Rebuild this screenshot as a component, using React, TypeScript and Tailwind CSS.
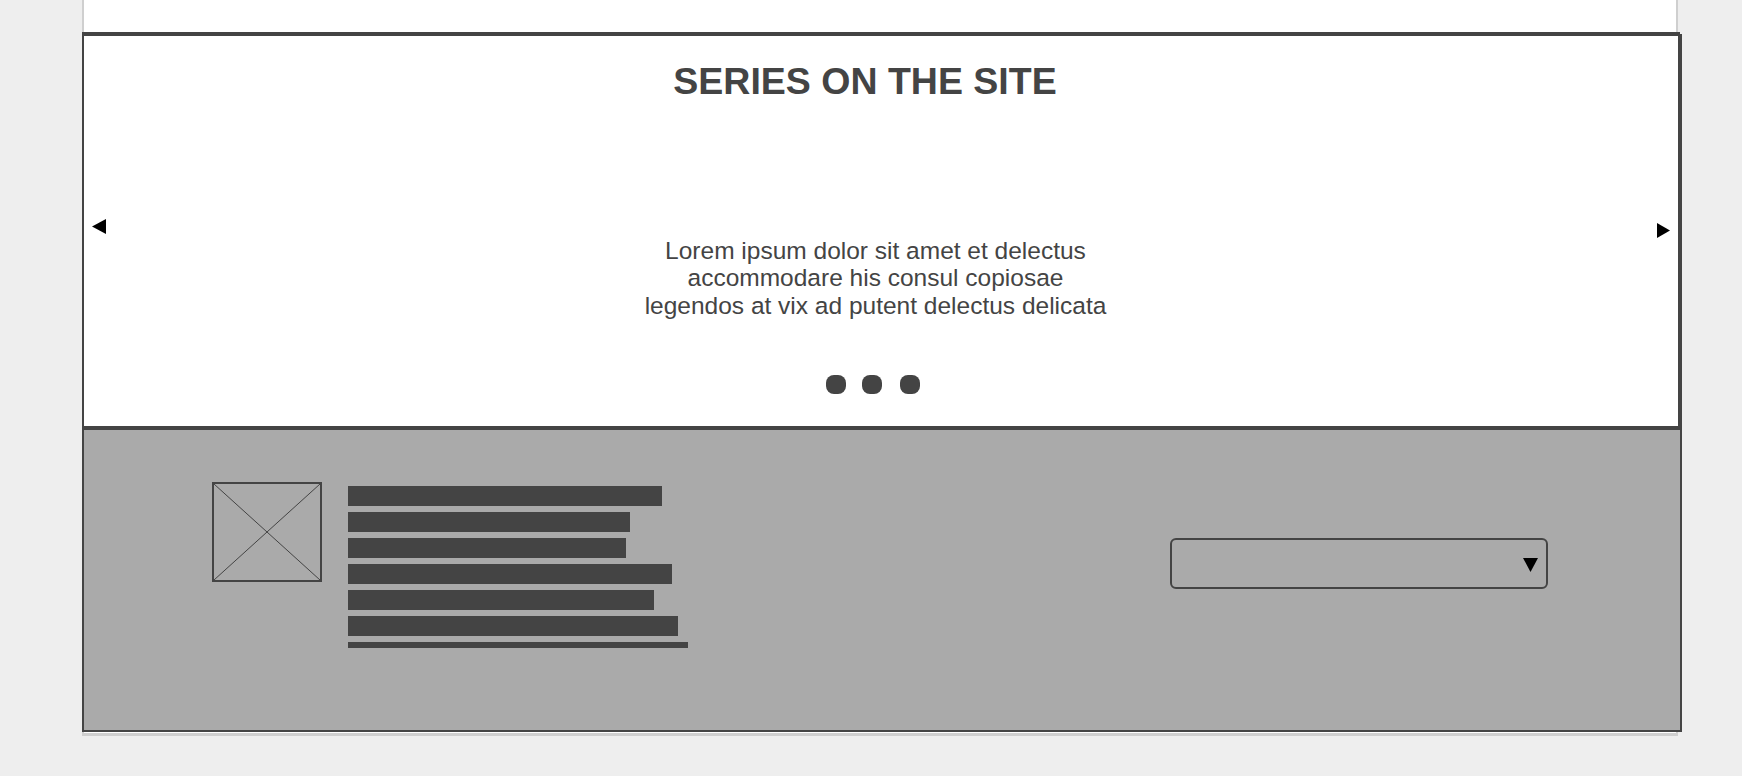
import React from "react";

const bars = [314, 282, 278, 324, 306, 330];

function LeftArrow() {
    return (
        <svg width="14" height="15" viewBox="0 0 14 15" className="block">
            <polygon points="14,0 14,15 0,7.5" fill="#000" />
        </svg>
    );
}

function RightArrow() {
    return (
        <svg width="13" height="15" viewBox="0 0 13 15" className="block">
            <polygon points="0,0 0,15 13,7.5" fill="#000" />
        </svg>
    );
}

function ImagePlaceholder() {
    return (
        <div className="w-[110px] h-[100px] border-2 border-[#444] shrink-0">
            <svg width="106" height="96" viewBox="0 0 106 96" className="block">
                <line x1="0" y1="0" x2="106" y2="96" stroke="#444" strokeWidth="1" />
                <line x1="106" y1="0" x2="0" y2="96" stroke="#444" strokeWidth="1" />
            </svg>
        </div>
    );
}

export default function App() {
    return (
        <div className="h-[776px] overflow-hidden bg-[#eeeeee] font-['Liberation_Sans',Arial,sans-serif]">
            <div className="ml-[82px] w-[1600px] flex flex-col">
                {/* top of the page, cut off */}
                <div className="w-[1596px] h-[32px] bg-white border-x-2 border-[#cfcfcf]" />

                {/* carousel */}
                <div className="w-[1598px] h-[396px] bg-white border-t-4 border-x-2 border-b-2 border-[#444] shadow-[2px_2px_0_0_#444] flex">
                    <div className="pl-2 pt-[183px]">
                        <LeftArrow />
                    </div>
                    <div className="flex-1 flex flex-col items-center">
                        <h2 className="mt-[27px] pr-[33px] text-[37.5px] leading-[37.5px] font-bold text-[#444]">
                            SERIES ON THE SITE
                        </h2>
                        <p className="mt-[136px] pr-[12px] text-center text-[24.5px] leading-[27.7px] text-[#444]">
                            Lorem ipsum dolor sit amet et delectus
                            <br />
                            accommodare his consul copiosae
                            <br />
                            legendos at vix ad putent delectus delicata
                        </p>
                        <div className="mt-[55px] pr-[18px] flex items-center">
                            <span className="w-[20px] h-[19px] rounded-[8px] bg-[#444]" />
                            <span className="ml-[16px] w-[20px] h-[19px] rounded-[8px] bg-[#444]" />
                            <span className="ml-[18px] w-[20px] h-[19px] rounded-[8px] bg-[#444]" />
                        </div>
                    </div>
                    <div className="pr-2 pt-[187px]">
                        <RightArrow />
                    </div>
                </div>

                {/* footer */}
                <div className="w-[1600px] h-[304px] bg-[#aaaaaa] border-2 border-[#444] flex items-start pl-[128px] pt-[52px] pr-[132px]">
                    <ImagePlaceholder />
                    <div className="ml-[26px] mt-[4px] flex flex-col gap-[6px]">
                        {bars.map((w, i) => (
                            <div key={i} className="h-[20px] bg-[#444]" style={{ width: w }} />
                        ))}
                        <div className="h-[6px] w-[340px] bg-[#444]" />
                    </div>
                    <div className="flex-1" />
                    <div className="mt-[56px] w-[378px] h-[51px] border-2 border-[#444] rounded-[6px] flex items-start justify-end pr-[8px] pt-[18px]">
                        <svg width="15" height="14" viewBox="0 0 15 14" className="block">
                            <polygon points="0,0 15,0 7.5,14" fill="#000" />
                        </svg>
                    </div>
                </div>

                {/* page bottom */}
                <div className="w-[1596px] h-[4px] bg-white border-x-2 border-b-[3px] border-[#cfcfcf]" />
            </div>
        </div>
    );
}
